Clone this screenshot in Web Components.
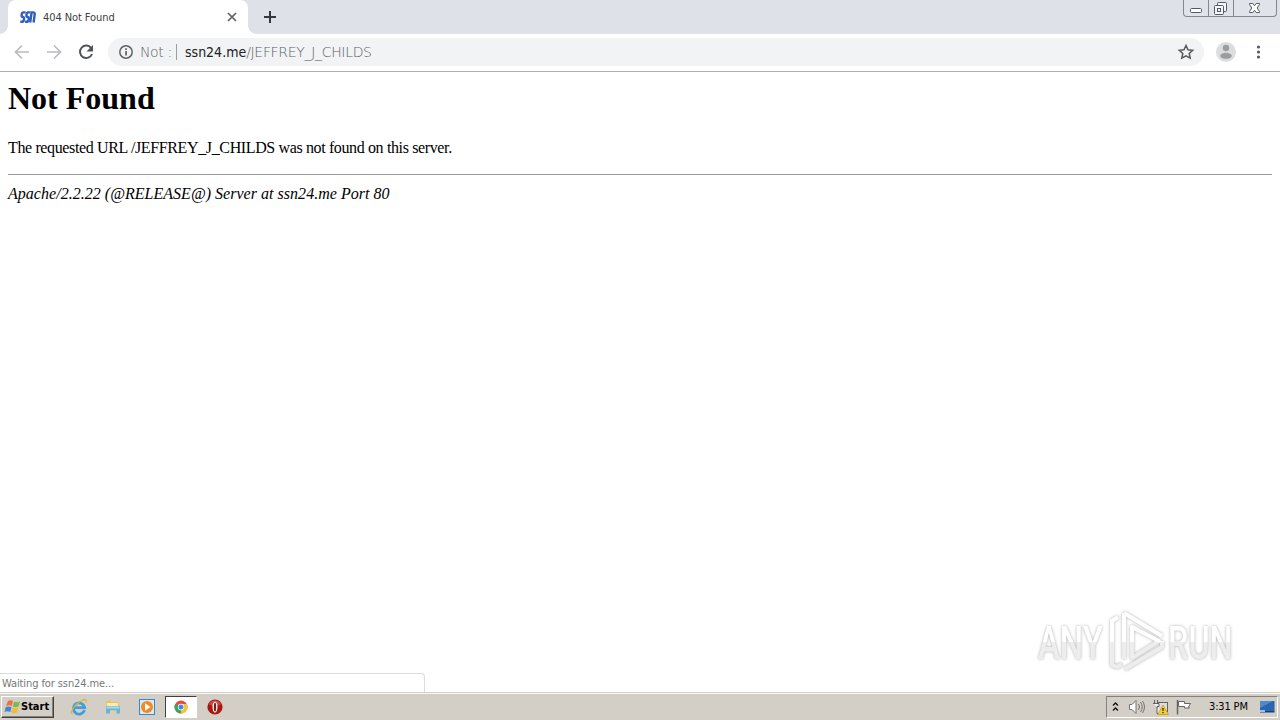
<!DOCTYPE html>
<html lang="en">
<head>
<meta charset="utf-8">
<title>404 Not Found</title>
<style>
    body {
        margin: 0;
        height: 720px;
        overflow: hidden;
        background: white;
        font-family: "DejaVu Sans Condensed", "DejaVu Sans", sans-serif;
    }
</style>
</head>
<body>
<desktop-screen>
    <tab-strip slot="top" title-text="404 Not Found"></tab-strip>
    <address-bar slot="top" host="ssn24.me" path="/JEFFREY_J_CHILDS"></address-bar>
    <error-page>
        <span slot="title">Not Found</span>
        <span slot="message">The requested URL /JEFFREY_J_CHILDS was not found on this server.</span>
        <span slot="server">Apache/2.2.22 (@RELEASE@) Server at ssn24.me Port 80</span>
    </error-page>
    <run-watermark slot="over"></run-watermark>
    <status-bubble slot="over">Waiting for ssn24.me...</status-bubble>
    <task-bar slot="bottom" clock="3:31 PM"></task-bar>
</desktop-screen>

<script>
class DesktopScreen extends HTMLElement {
    constructor() {
        super();
        this.attachShadow({ mode: 'open' }).innerHTML = `
        <style>
            :host {
                display: flex;
                flex-direction: column;
                width: 1280px;
                height: 720px;
            }
            main { flex: 1; position: relative; min-height: 0; }
        </style>
        <slot name="top"></slot>
        <main><slot></slot><slot name="over"></slot></main>
        <slot name="bottom"></slot>
        `;
    }
}

class TabStrip extends HTMLElement {
    constructor() {
        super();
        this.attachShadow({ mode: 'open' });
    }

    connectedCallback() {
        const title = this.getAttribute('title-text') || "New Tab";

        this.shadowRoot.innerHTML = `
        <style>
            :host {
                display: flex;
                height: 34px;
                background: #dee1e8;
                padding-left: 8px;
            }
            .tab {
                position: relative;
                display: flex;
                align-items: center;
                box-sizing: border-box;
                width: 240px;
                padding: 0 10px 0 12px;
                background: white;
                border-radius: 8px 8px 0 0;
                font-size: 11px;
                color: #3c4043;
            }
            .tab::before, .tab::after {
                content: "";
                position: absolute;
                bottom: 0;
                width: 8px;
                height: 8px;
            }
            .tab::before { left: -8px; background: radial-gradient(circle at 0 0, transparent 7.5px, white 8px); }
            .tab::after { right: -8px; background: radial-gradient(circle at 100% 0, transparent 7.5px, white 8px); }
            .name { flex: 1; margin-left: 7px; letter-spacing: -0.08px; }
            .plus { margin: 10px 0 0 15px; }
            svg { display: block; }
            window-buttons { margin: 0 3px 0 auto; }
        </style>
        <div class="tab">
            <svg width="16" height="16" fill="none" stroke="#2f5fc0" stroke-width="2.4">
                <path d="M5.6 3.4H3.2Q2 3.5 1.8 5L1.6 6.6Q1.6 8 3 8Q4.3 8.2 4 9.8L3.8 11Q3.5 12.8 2 12.8H.3"/>
                <path d="M10.4 3.4H8Q6.8 3.5 6.6 5L6.4 6.6Q6.4 8 7.8 8Q9.1 8.2 8.8 9.8L8.6 11Q8.3 12.8 6.8 12.8H5"/>
                <path d="M10.2 13.5L11.6 3.4H13Q15 3.4 14.7 5.5L13.6 13.5"/>
            </svg>
            <span class="name">${title}</span>
            <svg width="12" height="12" stroke="#5f6368" stroke-width="1.7"><path d="M2 2l8 8M10 2l-8 8"/></svg>
        </div>
        <svg class="plus" width="14" height="14" stroke="#34383d" stroke-width="2"><path d="M7 1v12M1 7h12"/></svg>
        <window-buttons></window-buttons>
        `;
    }
}

class WindowButtons extends HTMLElement {
    constructor() {
        super();
        this.attachShadow({ mode: 'open' }).innerHTML = `
        <style>
            :host {
                display: flex;
                box-sizing: border-box;
                width: 94px;
                height: 17px;
                border: 1px solid #85888f;
                border-top: 0;
                border-radius: 0 0 4px 4px;
                background: #e0e3e9;
            }
            div { display: flex; width: 24px; border-right: 1px solid #85888f; }
            div:last-child { flex: 1; border: 0; }
            svg { margin: auto; display: block; }
        </style>
        <div><svg width="24" height="16" fill="#fff" stroke="#555962"><rect x="6.5" y="8.5" width="11" height="4" rx="1.2"/></svg></div>
        <div><svg width="24" height="16" fill="#f4f5f8" stroke="#555962"><rect x="8.5" y="2.5" width="9" height="9" rx="1"/><rect x="5.500" y="5.500" width="9" height="9" rx="1"/><rect x="8.500" y="8.500" width="3" height="3"/></svg></div>
        <div><svg width="14" height="16" fill="#fff" stroke="#555962"><path d="M1.5 3.500h3.300L6.500 5.700l1.700-2.200h3.300v1L9.200 8l2.300 3.500v1H8.200L6.500 10.300l-1.700 2.200H1.500v-1L3.800 8 1.500 4.500z"/></svg></div>
        `;
    }
}

class AddressBar extends HTMLElement {
    constructor() {
        super();
        this.attachShadow({ mode: 'open' });
    }

    connectedCallback() {
        const host = this.getAttribute('host') || "";
        const path = this.getAttribute('path') || "";

        this.shadowRoot.innerHTML = `
        <style>
            :host {
                display: flex;
                align-items: center;
                box-sizing: border-box;
                height: 38px;
                padding: 0 10px 1px 10px;
                border-bottom: 1px solid #acaeb1;
                background: white;
            }
            svg { display: block; flex: none; }
            .nav { display: flex; gap: 8px; width: 98px; }
            .field {
                display: flex;
                align-items: center;
                box-sizing: border-box;
                width: 1096px;
                height: 28px;
                padding: 0 9px;
                border-radius: 14px;
                background: #f1f3f4;
                font-size: 14px;
                color: #5c6166;
            }
            .not { margin-left: 5px; width: 36px; font-family: "DejaVu Sans", sans-serif; font-weight: 200; letter-spacing: -0.4px; white-space: pre; }
            .url { flex: 1; padding-left: 8px; font-family: "DejaVu Sans", sans-serif; font-weight: 200; }
            .path { letter-spacing: -0.32px; }
            .bar { width: 1px; height: 16px; background: #9a9da1; }
            b { font: 14px "DejaVu Sans Condensed", sans-serif; color: #202124; }
            .me { margin-left: 11px; }
            .dots { margin-left: 14px; }
        </style>
        <div class="nav">
            <svg width="24" height="24" fill="none" stroke="#b9bbbe" stroke-width="1.7"><path d="M19 12H6M12 5.5L5.5 12l6.5 6.5"/></svg>
            <svg width="24" height="24" fill="none" stroke="#b9bbbe" stroke-width="1.7"><path d="M5 12h13M12 5.5l6.5 6.5-6.5 6.5"/></svg>
            <svg width="24" height="24"><path d="M17.2 8.1A6.2 6.2 0 1 0 18 14" fill="none" stroke="#505357" stroke-width="2"/><path d="M19 5v6.5h-6.5z" fill="#505357"/></svg>
        </div>
        <div class="field">
            <svg width="18" height="18"><circle cx="9" cy="9" r="6.2" fill="none" stroke="#5f6368" stroke-width="1.5"/><path d="M8.2 8h1.7v4.5H8.2zM8.2 5.2h1.7v1.7H8.2z" fill="#5f6368"/></svg>
            <span class="not">Not :</span>
            <span class="bar"></span>
            <span class="url"><b>${host}</b><span class="path">${path}</span></span>
            <svg width="18" height="18"><path d="M9 2.5l2 4.3 4.7.5-3.5 3.2 1 4.6L9 12.8l-4.2 2.3 1-4.6-3.5-3.2 4.7-.5z" fill="none" stroke="#55595e" stroke-width="1.5"/></svg>
        </div>
        <svg class="me" width="22" height="22"><circle cx="11" cy="11" r="10" fill="#dcdddd"/><circle cx="11" cy="7" r="3.2" fill="#9b9da0"/><ellipse cx="11" cy="14.8" rx="5.8" ry="3" fill="#9b9da0"/></svg>
        <svg class="dots" width="16" height="18" fill="#55595e"><circle cx="7.5" cy="4" r="1.6"/><circle cx="7.5" cy="9" r="1.6"/><circle cx="7.5" cy="14" r="1.6"/></svg>
        `;
    }
}

class ErrorPage extends HTMLElement {
    constructor() {
        super();
        this.attachShadow({ mode: 'open' }).innerHTML = `
        <style>
            :host {
                display: block;
                padding: 8px;
                font: 16px "Liberation Serif", serif;
                color: black;
            }
            h1 { margin: 0 0 22px; font-size: 32px; line-height: 37px; }
            p { margin: 0 0 17px; line-height: 18px; letter-spacing: -0.37px; }
            hr { margin: 8px 0; height: 1px; border: 0; background: #999; }
            address { line-height: 18px; padding-top: 2px; letter-spacing: 0.03px; }
        </style>
        <h1><slot name="title"></slot></h1>
        <p><slot name="message"></slot></p>
        <hr>
        <address><slot name="server"></slot></address>
        `;
    }
}

class RunWatermark extends HTMLElement {
    constructor() {
        super();
        this.attachShadow({ mode: 'open' }).innerHTML = `
        <style>
            :host { display: block; position: absolute; right: 38px; bottom: 12px; }
            svg { display: block; filter: drop-shadow(0 0 1.5px rgba(0,0,0,.32)); }
            text { font: 500 47px Roboto, sans-serif; }
        </style>
        <svg width="214" height="80" viewBox="0 0 214 80">
            <defs>
                <linearGradient id="fade" x2="0" y2="80" gradientUnits="userSpaceOnUse">
                    <stop offset=".52" stop-color="#fff"/>
                    <stop offset=".52" stop-color="#ededed"/>
                </linearGradient>
                <linearGradient id="fade-text" y1="-59" x2="0" y2="21" gradientUnits="userSpaceOnUse">
                    <stop offset=".52" stop-color="#fff"/>
                    <stop offset=".52" stop-color="#ededed"/>
                </linearGradient>
            </defs>
            <g fill="url(#fade-text)">
                <text transform="translate(10 59) scale(.7 1)">ANY</text>
                <text transform="translate(140 59) scale(.69 1)">RUN</text>
            </g>
            <g fill="none" stroke="url(#fade)" stroke-width="4" stroke-linejoin="round">
                <path d="M96 13v46M96 13l38 23"/>
                <path d="M90 17l-6 4v44l5 2 5-3M97 69l37-22v-6M104 27v31l27-17z"/>
            </g>
        </svg>
        `;
    }
}

class StatusBubble extends HTMLElement {
    constructor() {
        super();
        this.attachShadow({ mode: 'open' }).innerHTML = `
        <style>
            :host {
                position: absolute;
                left: 0;
                bottom: 0;
                box-sizing: border-box;
                width: 425px;
                height: 19px;
                padding-left: 2px;
                border: 1px solid #dcdcdc;
                border-width: 1px 1px 0 0;
                border-radius: 0 4px 0 0;
                background: white;
                font-size: 11px;
                line-height: 19px;
                letter-spacing: -0.1px;
                color: #777;
            }
        </style>
        <slot></slot>
        `;
    }
}

class TaskBar extends HTMLElement {
    constructor() {
        super();
        this.attachShadow({ mode: 'open' });
    }

    connectedCallback() {
        const clock = this.getAttribute('clock') || "";

        this.shadowRoot.innerHTML = `
        <style>
            :host {
                display: flex;
                align-items: center;
                box-sizing: border-box;
                height: 28px;
                padding: 0 2px 0 1px;
                border-top: 1px solid #d4d0c8;
                box-shadow: inset 0 1px #f8f7f5;
                background: #d4cfc6;
            }
            svg { display: block; flex: none; }
            .start {
                display: flex;
                align-items: center;
                box-sizing: border-box;
                width: 53px;
                height: 22px;
                padding-left: 2px;
                border: 1px solid;
                border-color: white #404040 #404040 white;
                box-shadow: inset -1px -1px #85817b;
                font-size: 11px;
                font-weight: bold;
                letter-spacing: 0;
            }
            .apps { display: flex; align-items: center; margin-left: 8px; }
            .app { display: flex; justify-content: center; align-items: center; box-sizing: border-box; width: 34px; height: 22px; }
            .on { width: 32px; margin: 0 1px; background: #fff; border: 1px solid; border-color: #404040 #fff #fff #404040; }
            .tray {
                display: flex;
                align-items: center;
                box-sizing: border-box;
                width: 172px;
                height: 22px;
                margin-left: auto;
                padding-left: 5px;
                border: 1px solid;
                border-color: #85817b #fff #fff #85817b;
                font-size: 11px;
            }
            .time { width: 40px; margin: 0 10px 0 16px; white-space: nowrap; letter-spacing: -0.15px; }
        </style>
        <div class="start">
            <svg width="17" height="17">
                <path d="M4 3Q6.500 1.500 9 3L7.800 8Q5 6.700 2 8z" fill="#ed7044"/>
                <path d="M10 3.500Q12.500 5 16 3.500L14.500 8.500Q11.500 9.800 8.800 8.500z" fill="#80b84f"/>
                <path d="M1.800 9Q4.500 7.800 7.500 9L6.300 14Q3.500 12.500.5 14z" fill="#4184cf"/>
                <path d="M8.500 9.500Q11 11 14.200 9.500L13 14.500Q10 15.800 7.300 14.500z" fill="#efbd35"/>
            </svg>
            <span>Start</span>
        </div>
        <div class="apps">
            <div class="app"><svg width="18" height="18"><path d="M14.500 12A5.600 5.600 0 1 1 14.600 9.600H5" fill="none" stroke="#3e9fdc" stroke-width="2.800"/><path d="M2.500 16Q0 15.500 3 10.500Q6.500 5 12 2.500Q17-.2 16 4.500" fill="none" stroke="#dcb341" stroke-width="1.300"/></svg></div>
            <div class="app"><svg width="18" height="18"><path d="M2 3.500L6 2l1.500 2H15v9H2z" fill="#e7c65e"/><path d="M3 5h11v5H3z" fill="#f9edb0"/><path d="M2 8h14v7.500h-3.500V12H6v3.500H2z" fill="#69b4d9"/><path d="M2.500 8.500h13v2h-13z" fill="#aedaea"/></svg></div>
            <div class="app"><svg width="18" height="18"><rect x="1.500" y="1.500" width="15" height="15" fill="#d7eafa" stroke="#3e86c5"/><circle cx="9" cy="9" r="6" fill="#ee8b22"/><path d="M7 5.300v7.400l5.500-3.700z" fill="#fff"/></svg></div>
            <div class="app on"><svg width="16" height="16"><circle cx="8" cy="8" r="6.500" fill="#e64b3d"/><path d="M8 8L2.400 4.700A6.500 6.500 0 0 0 7.500 14.500z" fill="#3aa757"/><path d="M8 8v6.500A6.500 6.500 0 0 0 13.800 5H8z" fill="#f6c531"/><circle cx="8" cy="8" r="3.200" fill="#fff"/><circle cx="8" cy="8" r="2.500" fill="#4286ed"/></svg></div>
            <div class="app"><svg width="18" height="18"><circle cx="9" cy="9" r="7.600" fill="#a81914"/><path d="M3 6.500a6.500 6.500 0 0 1 12 0Q9 9 3 6.500" fill="#cc4b43"/><ellipse cx="9" cy="9" rx="2.500" ry="5.500" fill="#fff"/><ellipse cx="9" cy="9" rx="1.200" ry="4.600" fill="#792019"/></svg></div>
        </div>
        <div class="tray">
            <svg width="8" height="12" fill="none" stroke="#111" stroke-width="1.300"><path d="M1 4.500L3.500 2l2.500 2.500M1 9.500L3.500 7l2.500 2.500"/></svg>
            <svg width="20" height="18" style="margin-left:7px" fill="none" stroke="#77756f"><path d="M2.500 6.500H5l4-4v13l-4-4H2.500z" fill="#fff"/><path d="M11.500 6q2 3 0 6M13.500 4q3.500 5 0 10M15.500 3q4 6 0 12"/></svg>
            <svg width="20" height="18" style="margin-left:4px"><rect x="6.500" y="4.500" width="10" height="9" fill="#ddd" stroke="#64625e"/><path d="M3.500 2v3M6.500 2v3M2 5.500h6v3H6v7h7" stroke="#64625e" fill="#eee"/><path d="M12 7l5.500 9.500h-11z" fill="#f7cf24" stroke="#ad8a0d" stroke-width=".6"/><path d="M12 10v3M12 14v1.300" stroke="#222" stroke-width="1.200"/></svg>
            <svg width="18" height="18" style="margin-left:4px" fill="#fff" stroke="#66645f"><path d="M2.500 2v14.500" stroke-width="1.500"/><path d="M3.500 3.500h6v2h6l-2 3.500 1 1H9.500V8.500h-6z"/></svg>
            <span class="time">${clock}</span>
            <svg width="17" height="14"><path d="M1 1h14.500v10H1z" fill="#2a65ad"/><path d="M1 1h13L1 8z" fill="#4d8bce"/><path d="M1 11h14.500v1.500H1z" fill="#173f72"/><path d="M1 10h5v2H1z" fill="#9bc1e7"/></svg>
        </div>
        `;
    }
}

customElements.define('desktop-screen', DesktopScreen);
customElements.define('window-buttons', WindowButtons);
customElements.define('tab-strip', TabStrip);
customElements.define('address-bar', AddressBar);
customElements.define('error-page', ErrorPage);
customElements.define('run-watermark', RunWatermark);
customElements.define('status-bubble', StatusBubble);
customElements.define('task-bar', TaskBar);
</script>
</body>
</html>
